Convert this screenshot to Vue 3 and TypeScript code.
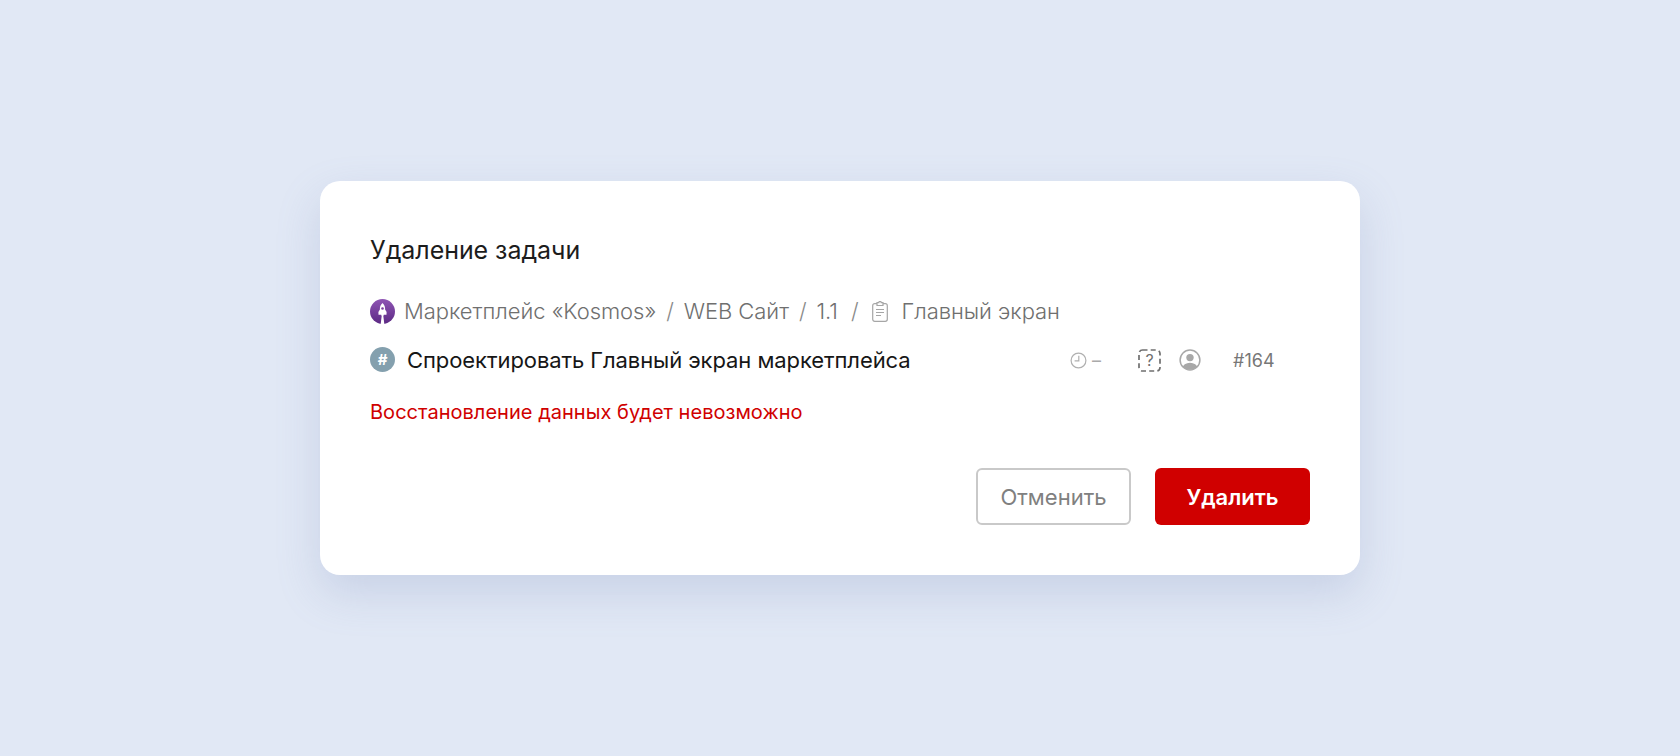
<script setup lang="ts">
const crumbs = ['WEB Сайт', '1.1']
</script>

<template>
  <div class="page">
    <div class="dialog">
      <h2 class="title">Удаление задачи</h2>

      <div class="crumbs">
        <svg class="avatar" width="25" height="25" viewBox="0 0 25 25">
          <defs>
            <linearGradient id="rocket-bg" x1="0" y1="0" x2="0" y2="1">
              <stop offset="0" stop-color="#8f55b4" />
              <stop offset="1" stop-color="#5c2a84" />
            </linearGradient>
          </defs>
          <circle cx="12.5" cy="12.5" r="12.5" fill="url(#rocket-bg)" />
          <path d="M12.5 4c2 1.8 2.8 4.2 2.6 6.6l1.5 2.5-.1 2.7h-2.7l-.4 1.2h-1.8l-.4-1.2H8.500l-.1-2.700 1.500-2.500C9.700 8.200 10.500 5.800 12.500 4z" fill="#fff" />
          <path d="M11.700 17h1.600l1 8h-3.600z" fill="#fff" />
          <circle cx="12.500" cy="9.500" r="1.300" fill="#7a3fa0" />
        </svg>
        <span class="crumb first">Маркетплейс «Kosmos»</span>
        <template v-for="c in crumbs" :key="c">
          <span class="sep">/</span>
          <span class="crumb">{{ c }}</span>
        </template>
        <span class="sep last">/</span>
        <svg class="clip" width="16" height="21" viewBox="0 0 16 21" fill="none" stroke="#a6a6a6" stroke-width="1.200">
          <rect x="0.700" y="2.700" width="14.600" height="17.600" rx="2" />
          <path d="M5 3V1.600h1.800a1.200 1.200 0 0 1 2.400 0H11V4.500H5z" fill="#fff" />
          <path d="M4 8.500h8M4 11.500h8M4 14.500h5" />
        </svg>
        <span class="crumb">Главный экран</span>
      </div>

      <div class="task">
        <span class="hash">#</span>
        <span class="task-name">Спроектировать Главный экран маркетплейса</span>
        <div class="meta">
          <svg class="clock" width="17" height="17" viewBox="0 0 17 17" fill="none" stroke="#b0b0b0" stroke-width="1.200">
            <circle cx="8.500" cy="8.500" r="7.400" />
            <path d="M8.800 3.800v5H4.600" />
          </svg>
          <span class="dash">–</span>
          <svg class="unknown" width="23" height="23" viewBox="0 0 23 23" fill="none">
            <rect x="1" y="1" width="21" height="21" rx="3.500" stroke="#6f6f6f" stroke-width="1.700" stroke-dasharray="5 3.200" />
            <text x="11.500" y="17" text-anchor="middle" class="q">?</text>
          </svg>
          <svg class="user" width="22" height="22" viewBox="0 0 22 22">
            <defs>
              <clipPath id="user-clip"><circle cx="11" cy="11" r="9.800" /></clipPath>
            </defs>
            <circle cx="11" cy="8.600" r="3.700" fill="#a8a8a8" />
            <ellipse cx="11" cy="19" rx="7.400" ry="5.200" fill="#a8a8a8" clip-path="url(#user-clip)" />
            <circle cx="11" cy="11" r="9.900" fill="none" stroke="#a8a8a8" stroke-width="1.500" />
          </svg>
          <span class="num">#164</span>
        </div>
      </div>

      <p class="warn">Восстановление данных будет невозможно</p>

      <div class="actions">
        <button class="btn cancel">Отменить</button>
        <button class="btn del">Удалить</button>
      </div>
    </div>
  </div>
</template>

<style>
html,
body {
  margin: 0;
  background: #e1e8f5;
}
</style>

<style scoped>
.page {
  height: 756px;
  display: flex;
  align-items: flex-start;
  justify-content: center;
  box-sizing: border-box;
  padding-top: 181px;
  font-family: Inter, "Liberation Sans", sans-serif;
}

.dialog {
  width: 1040px;
  height: 394px;
  box-sizing: border-box;
  padding: 54px 50px 50px;
  background: #fff;
  border-radius: 20px;
  box-shadow: 0 18px 44px rgba(120, 140, 185, 0.24);
  display: flex;
  flex-direction: column;
}

.title {
  margin: 0;
  font-size: 25px;
  line-height: 30px;
  font-weight: 400;
  letter-spacing: -0.05px;
  color: #1c1c1c;
}

.crumbs {
  display: flex;
  align-items: center;
  height: 26px;
  margin-top: 33px;
  font-size: 22px;
  font-weight: 300;
  letter-spacing: -0.05px;
  color: #6f6f6f;
}

.crumb {
  white-space: nowrap;
}

.crumb.first {
  margin-left: 9px;
}

.sep {
  margin: 0 10px;
  color: #8a8a8a;
}

.sep.last {
  margin: 0 13px;
}

.clip {
  margin-right: 14px;
}

.task {
  display: flex;
  align-items: center;
  height: 28px;
  margin-top: 22px;
}

.hash {
  width: 25px;
  height: 25px;
  margin-top: -2px;
  border-radius: 50%;
  background: #84a0ae;
  color: #fff;
  font-size: 15px;
  font-weight: 700;
  display: flex;
  align-items: center;
  justify-content: center;
}

.task-name {
  margin-left: 12px;
  font-size: 22px;
  font-weight: 400;
  letter-spacing: -0.08px;
  color: #161616;
  white-space: nowrap;
}

.meta {
  margin-left: auto;
  display: flex;
  align-items: center;
  width: 240px;
  flex: none;
  font-size: 18px;
  color: #777;
}

.dash {
  margin-left: 5px;
  color: #aaa;
  font-size: 18px;
}

.unknown {
  margin-left: 37px;
}

.q {
  font-family: Inter, sans-serif;
  font-size: 16px;
  font-weight: 400;
  fill: #6f6f6f;
}

.user {
  margin-left: 18px;
}

.num {
  margin-left: 32px;
  font-weight: 400;
}

.warn {
  margin: 25px 0 0;
  font-size: 20px;
  line-height: 26px;
  letter-spacing: 0.03px;
  color: #d00000;
}

.actions {
  margin-top: auto;
  display: flex;
  justify-content: flex-end;
  gap: 24px;
}

.btn {
  width: 155px;
  height: 57px;
  border-radius: 6px;
  font-family: inherit;
  font-size: 22px;
  box-sizing: border-box;
}

.cancel {
  background: #fff;
  border: 2px solid #c9c9c9;
  color: #808080;
  font-weight: 400;
}

.del {
  background: #d00000;
  border: none;
  color: #fff;
  font-weight: 600;
}
</style>
